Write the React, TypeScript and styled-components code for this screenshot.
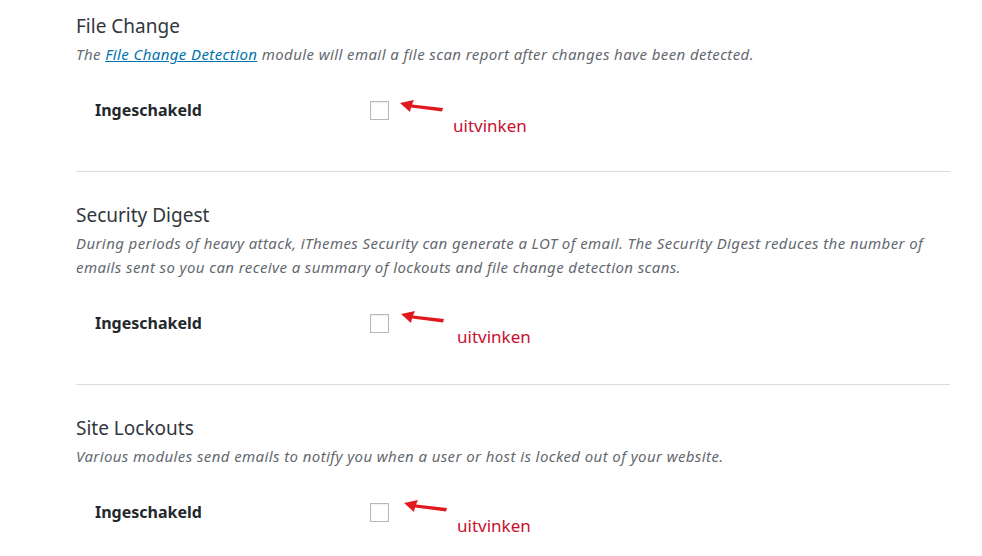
import styled, { createGlobalStyle } from 'styled-components';

const GlobalStyle = createGlobalStyle`
  html, body {
    margin: 0;
    padding: 0;
    background: #ffffff;
  }
  body {
    font-family: 'Noto Sans', 'Open Sans', sans-serif;
    color: #23282d;
  }
`;

const Page = styled.div`
  width: 874px;
  padding: 13px 0 20px 76px;
  box-sizing: content-box;
`;

const Section = styled.section`
  display: flex;
  flex-direction: column;
`;

const Title = styled.h2`
  margin: 0;
  font-size: 19px;
  line-height: 26px;
  font-weight: 400;
  color: #32373c;
`;

const Description = styled.p`
  margin: 3px 0 0;
  font-size: 15px;
  letter-spacing: 0.4px;
  line-height: 24px;
  font-style: italic;
  color: #646970;

  a {
    color: #0073aa;
    text-decoration: underline;
  }
`;

const Row = styled.div`
  position: relative;
  display: flex;
  align-items: center;
  height: 40px;
  margin-top: 24px;
  padding-left: 19px;
`;

const Label = styled.label`
  width: 275px;
  font-size: 16px;
  font-weight: 700;
  color: #23282d;
`;

const Checkbox = styled.span`
  display: block;
  width: 19px;
  height: 19px;
  box-sizing: border-box;
  border: 1px solid #b4b9be;
  background: #fff;
  box-shadow: inset 0 1px 2px rgba(0, 0, 0, 0.07);
`;

const Note = styled.div<{ $left: number; $top: number }>`
  position: absolute;
  left: ${({ $left }) => $left}px;
  top: ${({ $top }) => $top}px;
  display: flex;
  align-items: flex-start;
  pointer-events: none;
`;

const NoteText = styled.span<{ $gap: number }>`
  margin-left: ${({ $gap }) => $gap}px;
  margin-top: 16px;
  font-size: 17px;
  line-height: 20px;
  color: #c8102e;
`;

const Divider = styled.hr`
  margin: 41px 0 30px;
  border: 0;
  border-top: 1px solid #dcdcde;
  height: 0;
`;

const Arrow = () => (
  <svg width="44" height="14" viewBox="0 0 44 14">
    <polygon points="0,3 14,0 12,4.5 43,8 42,11.5 11,7.5 10,12" fill="#e0191e" />
  </svg>
);

type Item = {
  title: string;
  text: React.ReactNode;
  noteLeft: number;
  noteTop: number;
  gap: number;
};

const items: Item[] = [
  {
    title: 'File Change',
    text: (
      <>
        The <a href="#">File Change Detection</a> module will email a file scan report after
        changes have been detected.
      </>
    ),
    noteLeft: 324,
    noteTop: 10,
    gap: 9,
  },
  {
    title: 'Security Digest',
    text: 'During periods of heavy attack, iThemes Security can generate a LOT of email. The Security Digest reduces the number of emails sent so you can receive a summary of lockouts and file change detection scans.',
    noteLeft: 325,
    noteTop: 8,
    gap: 12,
  },
  {
    title: 'Site Lockouts',
    text: 'Various modules send emails to notify you when a user or host is locked out of your website.',
    noteLeft: 328,
    noteTop: 8,
    gap: 9,
  },
];

export default function App() {
  return (
    <>
      <GlobalStyle />
      <Page>
        {items.map((item, i) => (
          <Section key={item.title}>
            <Title>{item.title}</Title>
            <Description>{item.text}</Description>
            <Row>
              <Label>Ingeschakeld</Label>
              <Checkbox />
              <Note $left={item.noteLeft} $top={item.noteTop}>
                <Arrow />
                <NoteText $gap={item.gap}>uitvinken</NoteText>
              </Note>
            </Row>
            {i < items.length - 1 && <Divider />}
          </Section>
        ))}
      </Page>
    </>
  );
}
